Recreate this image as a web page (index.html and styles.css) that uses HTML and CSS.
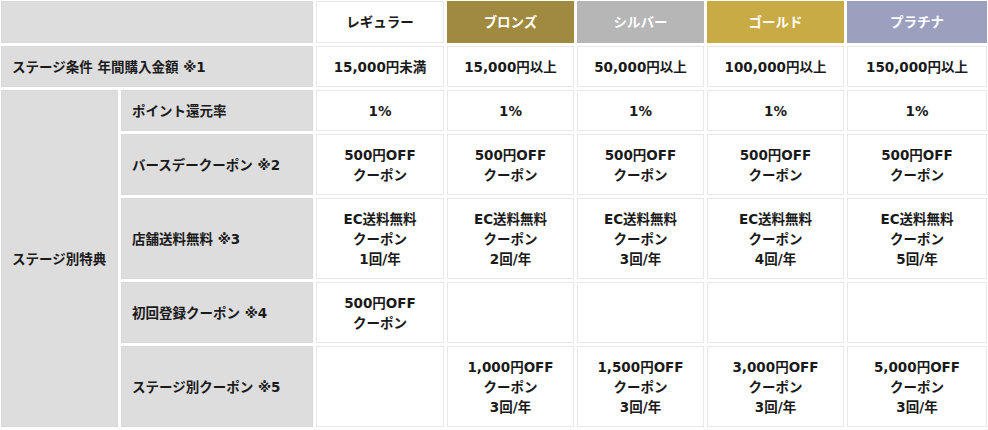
FILE: index.html
```html
<!DOCTYPE html>
<html lang="ja">
<head>
<meta charset="utf-8">
<title>ステージ別特典</title>
<link rel="stylesheet" href="styles.css">
</head>
<body>
<table class="stage-table">
  <colgroup>
    <col class="w-cat">
    <col class="w-item">
    <col class="w-regular">
    <col class="w-bronze">
    <col class="w-silver">
    <col class="w-gold">
    <col class="w-platinum">
  </colgroup>
  <thead>
    <tr class="row-head">
      <th class="label" colspan="2"></th>
      <th class="rank regular">レギュラー</th>
      <th class="rank bronze">ブロンズ</th>
      <th class="rank silver">シルバー</th>
      <th class="rank gold">ゴールド</th>
      <th class="rank platinum">プラチナ</th>
    </tr>
  </thead>
  <tbody>
    <tr>
      <th class="label" colspan="2">ステージ条件 年間購入金額 ※1</th>
      <td>15,000円未満</td>
      <td>15,000円以上</td>
      <td>50,000円以上</td>
      <td>100,000円以上</td>
      <td>150,000円以上</td>
    </tr>
    <tr>
      <th class="label" rowspan="5">ステージ別特典</th>
      <th class="label">ポイント還元率</th>
      <td>1%</td>
      <td>1%</td>
      <td>1%</td>
      <td>1%</td>
      <td>1%</td>
    </tr>
    <tr>
      <th class="label">バースデークーポン ※2</th>
      <td>500円OFF<br>クーポン</td>
      <td>500円OFF<br>クーポン</td>
      <td>500円OFF<br>クーポン</td>
      <td>500円OFF<br>クーポン</td>
      <td>500円OFF<br>クーポン</td>
    </tr>
    <tr>
      <th class="label">店舗送料無料 ※3</th>
      <td>EC送料無料<br>クーポン<br>1回/年</td>
      <td>EC送料無料<br>クーポン<br>2回/年</td>
      <td>EC送料無料<br>クーポン<br>3回/年</td>
      <td>EC送料無料<br>クーポン<br>4回/年</td>
      <td>EC送料無料<br>クーポン<br>5回/年</td>
    </tr>
    <tr>
      <th class="label">初回登録クーポン ※4</th>
      <td>500円OFF<br>クーポン</td>
      <td></td>
      <td></td>
      <td></td>
      <td></td>
    </tr>
    <tr>
      <th class="label">ステージ別クーポン ※5</th>
      <td></td>
      <td>1,000円OFF<br>クーポン<br>3回/年</td>
      <td>1,500円OFF<br>クーポン<br>3回/年</td>
      <td>3,000円OFF<br>クーポン<br>3回/年</td>
      <td>5,000円OFF<br>クーポン<br>3回/年</td>
    </tr>
  </tbody>
</table>
</body>
</html>
```
FILE: styles.css
```css
html, body {
  margin: 0;
  padding: 0;
  background: #ffffff;
  overflow: hidden;
}

.stage-table {
  table-layout: fixed;
  border-collapse: separate;
  border-spacing: 3px;
  width: 992px;
  margin: -2px 0 0 -2px;
  font-family: "DejaVu Sans", "Noto Sans CJK JP", sans-serif;
  font-size: 13.5px;
  font-weight: bold;
  line-height: 20px;
  color: #1a1a1a;
}

.w-cat { width: 117px; }
.w-item { width: 192px; }
.w-regular { width: 128px; }
.w-bronze { width: 127px; }
.w-silver { width: 127px; }
.w-gold { width: 137px; }
.w-platinum { width: 140px; }

.stage-table th,
.stage-table td {
  box-sizing: border-box;
  border: 1px solid #e8e8e8;
  padding: 10px 10px 9px;
  vertical-align: middle;
  font-weight: bold;
}

.stage-table td {
  text-align: center;
  background: #ffffff;
}

.row-head th {
  height: 42px;
  padding-bottom: 10px;
}

.label {
  background: #dddddd;
  border-color: #d9d9d9 !important;
  text-align: left;
}

.rank {
  text-align: center;
  color: #ffffff;
}

.rank.regular {
  background: #ffffff;
  color: #1a1a1a;
}

.rank.bronze {
  background: #9f8a3f;
  border-color: #9f8a3f;
}

.rank.silver {
  background: #b6b6b6;
  border-color: #b6b6b6;
}

.rank.gold {
  background: #c9ab45;
  border-color: #c9ab45;
}

.rank.platinum {
  background: #9ba0bf;
  border-color: #9ba0bf;
}
```
